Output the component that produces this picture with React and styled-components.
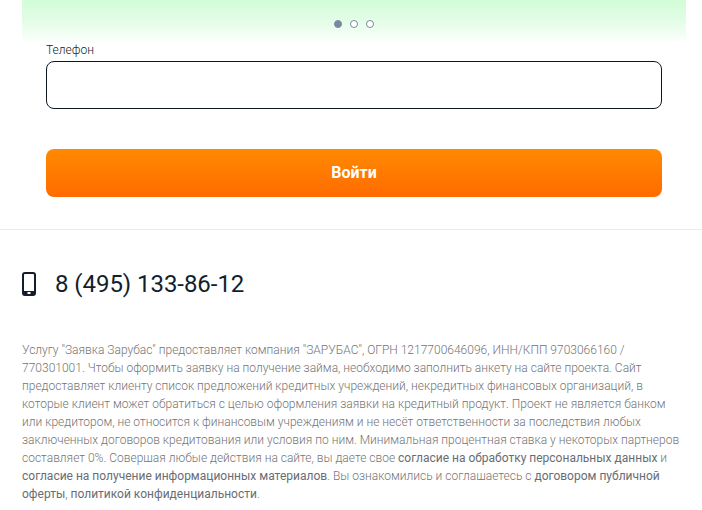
import styled, { createGlobalStyle } from 'styled-components';

const GlobalStyle = createGlobalStyle`
    html, body {
        margin: 0;
        padding: 0;
        background: #ffffff;
        overflow: hidden;
    }
    * {
        box-sizing: border-box;
    }
    body {
        font-family: Roboto, "Liberation Sans", sans-serif;
    }
`;

const Page = styled.div`
    display: flex;
    flex-direction: column;
    width: 702px;
    height: 510px;
    overflow: hidden;
`;

const Slider = styled.div`
    display: flex;
    justify-content: center;
    gap: 8px;
    height: 44px;
    margin: 0 16px 0 22px;
    padding-top: 20px;
    background: linear-gradient(180deg, #d2fcd8 0%, #e4fde7 50%, #ffffff 100%);
`;

const Dot = styled.span`
    width: 8px;
    height: 8px;
    border-radius: 50%;
    background: ${({ $active }) => ($active ? '#7b88a4' : '#ffffff')};
    border: 1px solid #7b88a4;
`;

const Form = styled.form`
    display: flex;
    flex-direction: column;
    padding: 0 40px 32px 46px;
    border-bottom: 1px solid #ebebeb;
`;

const Label = styled.label`
    margin-top: -2px;
    margin-bottom: 2px;
    font-size: 12px;
    font-weight: 300;
    line-height: 17px;
    color: #141e2b;
`;

const Input = styled.input`
    width: 100%;
    height: 48px;
    border: 1px solid #0f1822;
    border-radius: 8px;
    background: #ffffff;
    outline: none;
`;

const Submit = styled.button`
    height: 48px;
    margin-top: 40px;
    padding: 0 0 2px;
    border: none;
    border-radius: 8px;
    background: linear-gradient(180deg, #ff8a00 0%, #ff6b00 100%);
    color: #ffffff;
    font-family: inherit;
    font-size: 16px;
    font-weight: 700;
`;

const Footer = styled.footer`
    display: flex;
    flex-direction: column;
    padding: 38px 22px 0;
`;

const PhoneRow = styled.div`
    display: flex;
    align-items: center;
    gap: 19px;
    height: 32px;
    font-size: 24px;
    letter-spacing: -0.05px;
    color: #141e2b;
`;

const Legal = styled.p`
    margin: 41px 0 0;
    font-size: 12px;
    font-weight: 300;
    line-height: 18px;
    color: #757575;
`;

const LegalLink = styled.span`
    font-weight: 400;
    color: #686d73;
`;

function PhoneIcon() {
    return (
        <svg width="14" height="24" viewBox="0 0 14 24">
            <rect x="1" y="1" width="12" height="22" rx="2" fill="none" stroke="#141e2b" strokeWidth="2" />
            <rect x="1" y="19" width="12" height="4" fill="#141e2b" />
            <rect x="5.5" y="20" width="3" height="2" fill="#ffffff" />
        </svg>
    );
}

export default function App() {
    return (
        <Page>
            <GlobalStyle />
            <Slider>
                <Dot $active />
                <Dot />
                <Dot />
            </Slider>
            <Form>
                <Label htmlFor="phone">Телефон</Label>
                <Input id="phone" type="tel" />
                <Submit type="button">Войти</Submit>
            </Form>
            <Footer>
                <PhoneRow>
                    <PhoneIcon />
                    8 (495) 133-86-12
                </PhoneRow>
                <Legal>
                    Услугу "Заявка Зарубас" предоставляет компания "ЗАРУБАС", ОГРН 1217700646096, ИНН/КПП 9703066160 / 770301001. Чтобы оформить заявку на получение займа, необходимо заполнить анкету на сайте проекта. Сайт предоставляет клиенту список предложений кредитных учреждений, некредитных финансовых организаций, в которые клиент может обратиться с целью оформления заявки на кредитный продукт. Проект не является банком или кредитором, не относится к финансовым учреждениям и не несёт ответственности за последствия любых заключенных договоров кредитования или условия по ним. Минимальная процентная ставка у некоторых партнеров составляет 0%. Совершая любые действия на сайте, вы даете свое{' '}
                    <LegalLink>согласие на обработку персональных данных</LegalLink> и{' '}
                    <LegalLink>согласие на получение информационных материалов</LegalLink>. Вы ознакомились и соглашаетесь с{' '}
                    <LegalLink>договором публичной оферты</LegalLink>, <LegalLink>политикой конфиденциальности</LegalLink>.
                </Legal>
            </Footer>
        </Page>
    );
}
